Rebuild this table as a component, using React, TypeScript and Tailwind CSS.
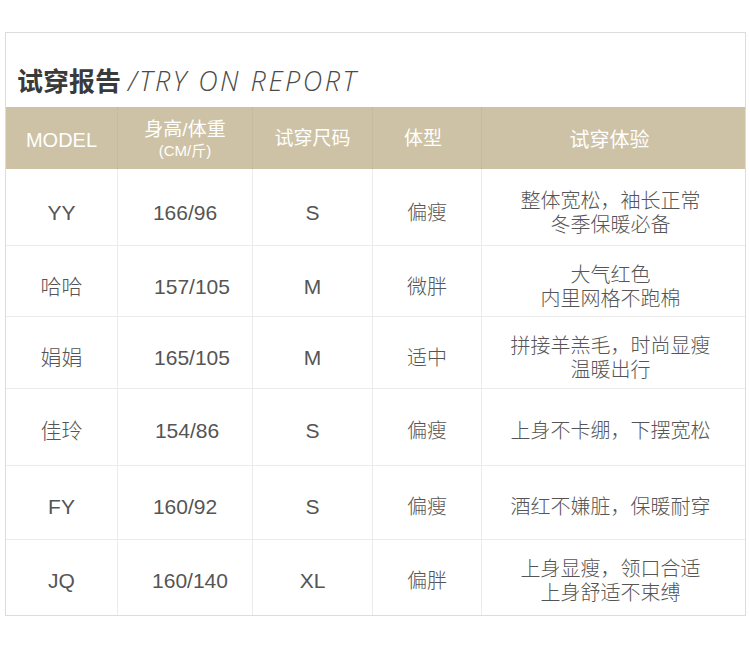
import React from 'react';

const FONT = { fontFamily: '"Liberation Sans", "Noto Sans CJK SC", sans-serif' };

type Row = { name: string; hw: string; hwPad: string; size: string; body: string; notes: string[]; h: string; pad: string };

const ROWS: Row[] = [
  { name: 'YY', hw: '166/96', hwPad: 'pl-0', size: 'S', body: '偏瘦', notes: ['整体宽松，袖长正常', '冬季保暖必备'], h: 'h-[77px]', pad: 'pt-[12px]' },
  { name: '哈哈', hw: '157/105', hwPad: 'pl-[14px]', size: 'M', body: '微胖', notes: ['大气红色', '内里网格不跑棉'], h: 'h-[71px]', pad: 'pt-[11px]' },
  { name: '娟娟', hw: '165/105', hwPad: 'pl-[14px]', size: 'M', body: '适中', notes: ['拼接羊羔毛，时尚显瘦', '温暖出行'], h: 'h-[72px]', pad: 'pt-[11px]' },
  { name: '佳玲', hw: '154/86', hwPad: 'pl-[4px]', size: 'S', body: '偏瘦', notes: ['上身不卡绷，下摆宽松'], h: 'h-[77px]', pad: 'pt-[8px]' },
  { name: 'FY', hw: '160/92', hwPad: 'pl-0', size: 'S', body: '偏瘦', notes: ['酒红不嫌脏，保暖耐穿'], h: 'h-[74px]', pad: 'pt-[8px]' },
  { name: 'JQ', hw: '160/140', hwPad: 'pl-[10px]', size: 'XL', body: '偏胖', notes: ['上身显瘦，领口合适', '上身舒适不束缚'], h: 'h-[75px]', pad: 'pt-[7px]' },
];

const COLS = 'grid grid-cols-[112px_135px_120px_109px_263px]';
const HEAD_CELL = 'flex items-center justify-center pt-[3px] border-r border-dotted border-[#bfb496]';

export default function App() {
  return (
    <div className="w-[750px] h-[656px] bg-white pt-[32px] pl-[5px]" style={FONT}>
      <div className="w-[741px] border border-[#dcdcdc]">
        <div className="h-[74px] flex items-end pb-[14px] pl-[11px]">
          <span className="text-[26px] font-bold text-[#3a3a3a] leading-none" style={{ fontFamily: '"Noto Sans CJK SC", sans-serif' }}>
            试穿报告
          </span>
          <span
            className="ml-[7px] text-[27px] italic font-light text-[#4a4a4a] leading-none tracking-[2.5px] relative top-[1px]"
            style={{ fontFamily: '"Open Sans", sans-serif' }}
          >
            /TRY ON REPORT
          </span>
        </div>
        <div className={`${COLS} h-[62px] bg-[#cdc2a6] text-white`}>
          <div className={`${HEAD_CELL} text-[20px]`}>MODEL</div>
          <div className={`${HEAD_CELL} flex-col`}>
            <span className="text-[19px] leading-[22px]">身高/体重</span>
            <span className="text-[15px] leading-[20px]">(CM/斤)</span>
          </div>
          <div className={`${HEAD_CELL} text-[19px]`}>试穿尺码</div>
          <div className={`${HEAD_CELL} text-[19px] pr-[8px]`}>体型</div>
          <div className="flex items-center justify-center pt-[3px] text-[20px] pr-[8px]">试穿体验</div>
        </div>
        {ROWS.map((r, i) => (
          <div
            key={r.name}
            className={`${COLS} ${r.h} text-[#555555] text-[20px] font-light ${i < ROWS.length - 1 ? 'border-b border-[#ebebeb]' : ''}`}
          >
            <div className={`flex items-center justify-center border-r border-[#ebebeb] text-[21px] ${r.pad}`}>{r.name}</div>
            <div className={`flex items-center justify-center border-r border-[#ebebeb] text-[21px] ${r.pad} ${r.hwPad}`}>{r.hw}</div>
            <div className={`flex items-center justify-center border-r border-[#ebebeb] text-[21px] ${r.pad}`}>{r.size}</div>
            <div className={`flex items-center justify-center border-r border-[#ebebeb] ${r.pad}`}>{r.body}</div>
            <div className={`flex flex-col items-center justify-center leading-[24px] pr-[6px] ${r.pad}`}>
              {r.notes.map((n) => (
                <span key={n}>{n}</span>
              ))}
            </div>
          </div>
        ))}
      </div>
    </div>
  );
}
